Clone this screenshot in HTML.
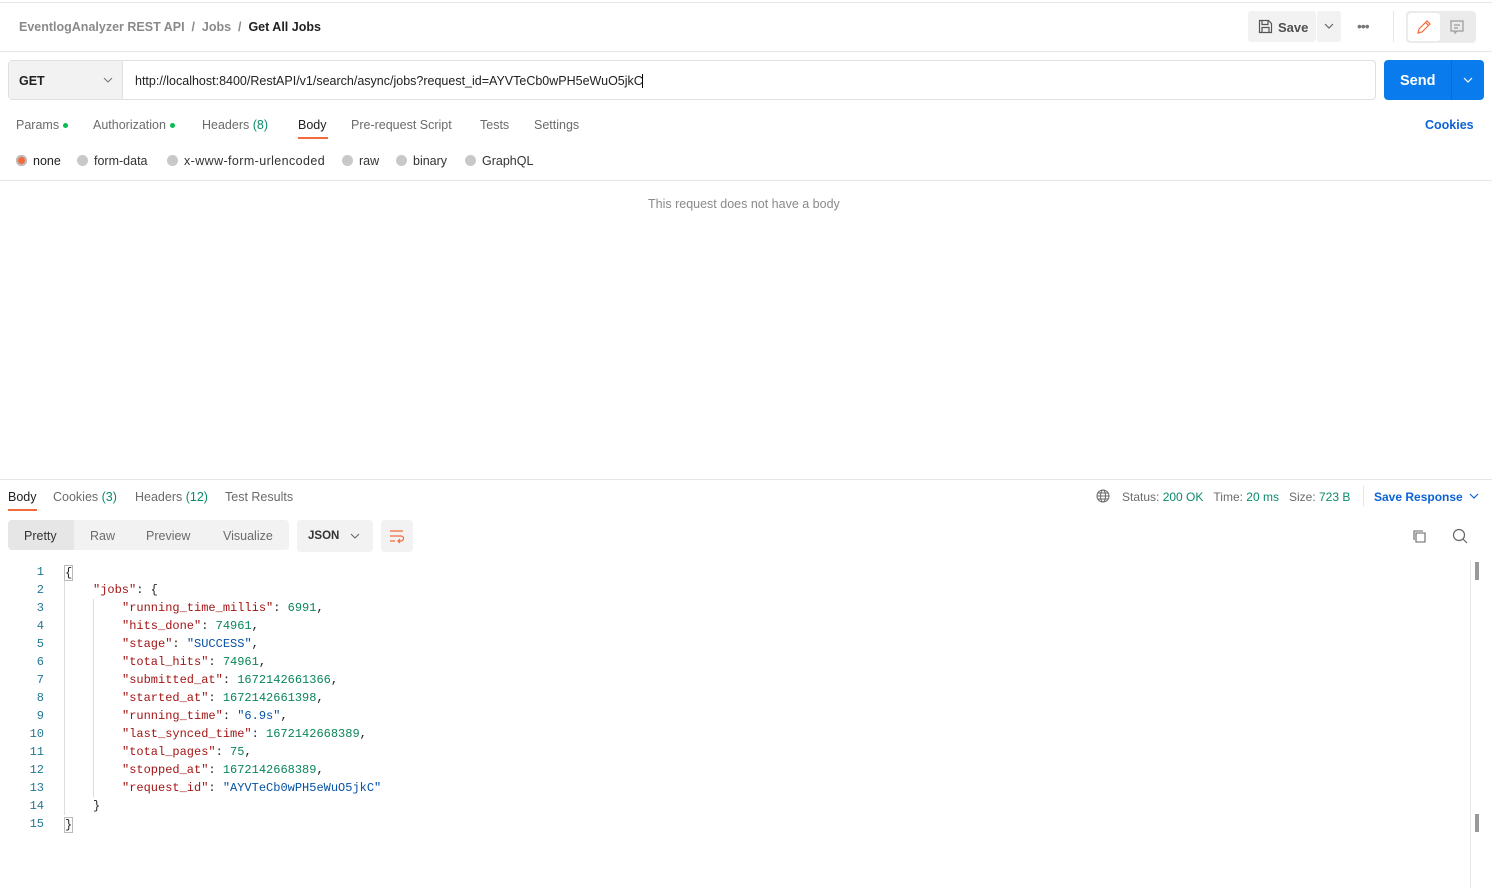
<!DOCTYPE html>
<html><head><meta charset="utf-8"><style>
*{margin:0;padding:0;box-sizing:border-box}
body{width:1492px;height:888px;background:#fff;font-family:"Liberation Sans",sans-serif;font-size:12.5px;color:#212121;position:relative;overflow:hidden}
.a{position:absolute;white-space:nowrap}
.g{color:#6b6b6b}
.code{font-family:"Liberation Mono",monospace;font-size:12px}
.k{color:#a31515}.n{color:#098658}.s{color:#0451a5}
.ln{color:#237893;text-align:right;width:44px;left:0}
.dot{display:inline-block;width:5px;height:5px;border-radius:50%;background:#0cbb52;margin-left:4px;vertical-align:middle}
.rad{display:inline-block;width:11px;height:11px;border-radius:50%;background:#c8c8c8;vertical-align:-1px;margin-right:6px}
</style></head><body>
<div class="a" style="left:0;top:2px;width:1492px;height:1px;background:#e6e6e6"></div>
<div class="a" style="left:19px;top:20px;font-size:12.5px;font-weight:bold"><span style="color:#8a8a8a">EventlogAnalyzer REST API &nbsp;/&nbsp; Jobs &nbsp;/&nbsp; </span><span style="color:#212121">Get All Jobs</span></div>
<div class="a" style="left:1248px;top:11px;width:68px;height:31px;background:#f2f2f2;border-radius:3px"></div>
<svg class="a" style="left:1258px;top:19px" width="15" height="15" viewBox="0 0 15 15" fill="none" stroke="#555" stroke-width="1.2"><path d="M1.5 1.5h9l3 3v9h-12z"/><path d="M4 1.5v4h6v-4M4 13.5v-5h7v5"/></svg>
<div class="a" style="left:1278px;top:20px;color:#505050;font-weight:bold;font-size:13px">Save</div>
<div class="a" style="left:1317px;top:11px;width:24px;height:31px;background:#f2f2f2;border-radius:3px"></div>
<svg class="a" style="left:1324px;top:23px" width="10" height="7"><path d="M1 1l4 4 4-4" fill="none" stroke="#666" stroke-width="1.2"/></svg>
<div class="a" style="left:1357px;top:18px;color:#777;font-size:14px;letter-spacing:-1px">•••</div>
<div class="a" style="left:1393px;top:11px;width:1px;height:31px;background:#e6e6e6"></div>
<div class="a" style="left:1406px;top:11px;width:70px;height:32px;background:#ebebeb;border-radius:4px"></div>
<div class="a" style="left:1408px;top:13px;width:32px;height:28px;background:#fff;border-radius:3px"></div>
<svg class="a" style="left:1416px;top:19px" width="16" height="16" fill="none" stroke="#f26b3a" stroke-width="1.2"><path d="M2 14l1-4 8-8 3 3-8 8z M9.5 3.5l3 3"/></svg>
<svg class="a" style="left:1449px;top:19px" width="16" height="16" fill="none" stroke="#999" stroke-width="1.2"><path d="M2 2h12v10H8l-2 2v-2H2z M5 6h6M5 9h4"/></svg>
<div class="a" style="left:0;top:51px;width:1492px;height:1px;background:#e6e6e6"></div>
<div class="a" style="left:8px;top:60px;width:1368px;height:40px;border:1px solid #e0e0e0;border-radius:4px"></div>
<div class="a" style="left:9px;top:61px;width:114px;height:38px;background:#f2f2f2;border-right:1px solid #e0e0e0"></div>
<div class="a" style="left:19px;top:74px;font-weight:bold;font-size:12.5px">GET</div>
<svg class="a" style="left:103px;top:77px" width="10" height="7"><path d="M1 1l4 4 4-4" fill="none" stroke="#777" stroke-width="1.1"/></svg>
<div class="a" style="left:135px;top:74px;font-size:12.5px;color:#212121">http://localhost:8400/RestAPI/v1/search/async/jobs?request_id=AYVTeCb0wPH5eWuO5jkC<span style="border-left:1px solid #000;margin-left:-1px"></span></div>
<div class="a" style="left:1384px;top:60px;width:100px;height:40px;background:#097bed;border-radius:4px"></div>
<div class="a" style="left:1451px;top:60px;width:1px;height:40px;background:#0a6ad0"></div>
<div class="a" style="left:1400px;top:73px;color:#fff;font-weight:bold;font-size:14.5px">Send</div>
<svg class="a" style="left:1463px;top:77px" width="10" height="7"><path d="M1 1l4 4 4-4" fill="none" stroke="#fff" stroke-width="1.2"/></svg>
<div class="a g" style="left:16px;top:118px">Params<span class="dot"></span></div>
<div class="a g" style="left:93px;top:118px">Authorization<span class="dot"></span></div>
<div class="a g" style="left:202px;top:118px">Headers <span style="color:#0a8a6a">(8)</span></div>
<div class="a" style="left:298px;top:118px">Body</div>
<div class="a" style="left:298px;top:137px;width:30px;height:2px;background:#f26b3a"></div>
<div class="a g" style="left:351px;top:118px">Pre-request Script</div>
<div class="a g" style="left:480px;top:118px">Tests</div>
<div class="a g" style="left:534px;top:118px">Settings</div>
<div class="a" style="left:1425px;top:118px;color:#0b63d6;font-weight:bold">Cookies</div>
<div class="a" style="left:16px;top:154px"><span class="rad" style="background:#f26b3a;box-shadow:inset 0 0 0 2px #bbb"></span>none</div>
<div class="a" style="left:77px;top:154px;color:#333"><span class="rad"></span>form-data</div>
<div class="a" style="left:167px;top:154px;color:#333;letter-spacing:0.4px"><span class="rad"></span>x-www-form-urlencoded</div>
<div class="a" style="left:342px;top:154px;color:#333"><span class="rad"></span>raw</div>
<div class="a" style="left:396px;top:154px;color:#333"><span class="rad"></span>binary</div>
<div class="a" style="left:465px;top:154px;color:#333"><span class="rad"></span>GraphQL</div>
<div class="a" style="left:0;top:180px;width:1492px;height:1px;background:#e6e6e6"></div>
<div class="a" style="left:648px;top:197px;color:#8a8a8a">This request does not have a body</div>
<div class="a" style="left:0;top:479px;width:1492px;height:1px;background:#e6e6e6"></div>
<div class="a" style="left:8px;top:490px">Body</div>
<div class="a" style="left:8px;top:509px;width:29px;height:2px;background:#f26b3a"></div>
<div class="a g" style="left:53px;top:490px">Cookies <span style="color:#0a8a6a">(3)</span></div>
<div class="a g" style="left:135px;top:490px">Headers <span style="color:#0a8a6a">(12)</span></div>
<div class="a g" style="left:225px;top:490px">Test Results</div>
<svg class="a" style="left:1096px;top:489px" width="14" height="14" fill="none" stroke="#666" stroke-width="1"><circle cx="7" cy="7" r="6"/><ellipse cx="7" cy="7" rx="2.5" ry="6"/><path d="M1 7h12M2 4h10M2 10h10"/></svg>
<div class="a g" style="left:1122px;top:490px;font-size:12px">Status: <span style="color:#0a8a6a">200 OK</span>&nbsp;&nbsp;&nbsp;Time: <span style="color:#0a8a6a">20 ms</span>&nbsp;&nbsp;&nbsp;Size: <span style="color:#0a8a6a">723 B</span></div>
<div class="a" style="left:1363px;top:486px;width:1px;height:20px;background:#e6e6e6"></div>
<div class="a" style="left:1374px;top:490px;color:#0b63d6;font-weight:bold;font-size:12px">Save Response</div>
<svg class="a" style="left:1469px;top:493px" width="10" height="7"><path d="M1 1l4 4 4-4" fill="none" stroke="#0b63d6" stroke-width="1.2"/></svg>
<div class="a" style="left:8px;top:520px;width:281px;height:30px;background:#f2f2f2;border-radius:4px"></div>
<div class="a" style="left:8px;top:520px;width:66px;height:30px;background:#e6e6e6;border-radius:4px 0 0 4px"></div>
<div class="a" style="left:24px;top:529px;color:#333">Pretty</div>
<div class="a g" style="left:90px;top:529px">Raw</div>
<div class="a g" style="left:146px;top:529px">Preview</div>
<div class="a g" style="left:223px;top:529px">Visualize</div>
<div class="a" style="left:297px;top:520px;width:76px;height:32px;background:#f2f2f2;border-radius:4px"></div>
<div class="a" style="left:308px;top:530px;font-weight:bold;font-size:11.5px;color:#333">JSON</div>
<svg class="a" style="left:350px;top:533px" width="10" height="7"><path d="M1 1l4 4 4-4" fill="none" stroke="#666" stroke-width="1.1"/></svg>
<div class="a" style="left:381px;top:520px;width:32px;height:32px;background:#f2f2f2;border-radius:4px"></div>
<svg class="a" style="left:389px;top:528px" width="16" height="16" fill="none" stroke="#f26b3a" stroke-width="1.2"><path d="M1 3h13M1 8h11a2.5 2.5 0 010 5H9M11 11l-2 2 2 2M1 13h5"/></svg>
<svg class="a" style="left:1412px;top:529px" width="15" height="15" fill="none" stroke="#666" stroke-width="1.1"><path d="M4 4h9v9H4z M2 11V2h9"/></svg>
<svg class="a" style="left:1452px;top:528px" width="16" height="16" fill="none" stroke="#666" stroke-width="1.2"><circle cx="7" cy="7" r="5.5"/><path d="M11 11l4 4"/></svg>
<div class="a" style="left:1470px;top:560px;width:1px;height:328px;background:#e6e6e6"></div>
<div class="a" style="left:1475px;top:562px;width:4px;height:18px;background:#999"></div>
<div class="a" style="left:1475px;top:814px;width:4px;height:18px;background:#999"></div>
<div class="a" style="left:93px;top:599px;width:1px;height:198px;background:#ddd"></div>
<div class="a" style="left:64px;top:581px;width:1px;height:234px;background:#ddd"></div>
<div class="code">
<div class="a ln" style="top:565px">1</div><div class="a" style="left:64px;top:565px;border:1px solid #bbb;line-height:14px">{</div>
<div class="a ln" style="top:583px">2</div><div class="a" style="left:93px;top:583px"><span class="k">"jobs"</span>: {</div>
<div class="a ln" style="top:601px">3</div><div class="a" style="left:122px;top:601px"><span class="k">"running_time_millis"</span>: <span class="n">6991</span>,</div>
<div class="a ln" style="top:619px">4</div><div class="a" style="left:122px;top:619px"><span class="k">"hits_done"</span>: <span class="n">74961</span>,</div>
<div class="a ln" style="top:637px">5</div><div class="a" style="left:122px;top:637px"><span class="k">"stage"</span>: <span class="s">"SUCCESS"</span>,</div>
<div class="a ln" style="top:655px">6</div><div class="a" style="left:122px;top:655px"><span class="k">"total_hits"</span>: <span class="n">74961</span>,</div>
<div class="a ln" style="top:673px">7</div><div class="a" style="left:122px;top:673px"><span class="k">"submitted_at"</span>: <span class="n">1672142661366</span>,</div>
<div class="a ln" style="top:691px">8</div><div class="a" style="left:122px;top:691px"><span class="k">"started_at"</span>: <span class="n">1672142661398</span>,</div>
<div class="a ln" style="top:709px">9</div><div class="a" style="left:122px;top:709px"><span class="k">"running_time"</span>: <span class="s">"6.9s"</span>,</div>
<div class="a ln" style="top:727px">10</div><div class="a" style="left:122px;top:727px"><span class="k">"last_synced_time"</span>: <span class="n">1672142668389</span>,</div>
<div class="a ln" style="top:745px">11</div><div class="a" style="left:122px;top:745px"><span class="k">"total_pages"</span>: <span class="n">75</span>,</div>
<div class="a ln" style="top:763px">12</div><div class="a" style="left:122px;top:763px"><span class="k">"stopped_at"</span>: <span class="n">1672142668389</span>,</div>
<div class="a ln" style="top:781px">13</div><div class="a" style="left:122px;top:781px"><span class="k">"request_id"</span>: <span class="s">"AYVTeCb0wPH5eWuO5jkC"</span></div>
<div class="a ln" style="top:799px">14</div><div class="a" style="left:93px;top:799px">}</div>
<div class="a ln" style="top:817px">15</div><div class="a" style="left:64px;top:817px;border:1px solid #bbb;line-height:14px">}</div>
</div>
</body></html>
